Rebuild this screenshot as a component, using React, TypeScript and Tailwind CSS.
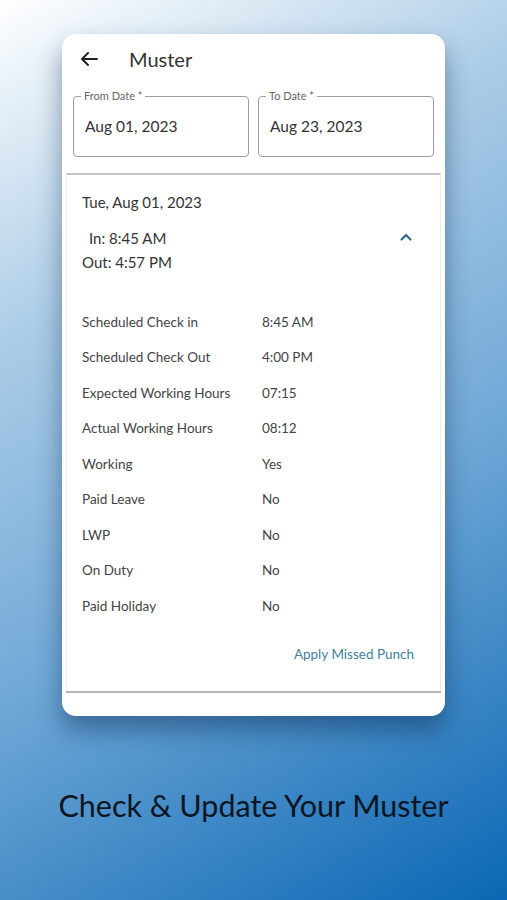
const rows: [string, string][] = [
  ["Scheduled Check in", "8:45 AM"],
  ["Scheduled Check Out", "4:00 PM"],
  ["Expected Working Hours", "07:15"],
  ["Actual Working Hours", "08:12"],
  ["Working", "Yes"],
  ["Paid Leave", "No"],
  ["LWP", "No"],
  ["On Duty", "No"],
  ["Paid Holiday", "No"],
];

function DateField({ label, value }: { label: string; value: string }) {
  return (
    <div className="relative flex-1 h-[61px] border border-[#9e9e9e] rounded-[4px] flex items-center pl-[11px]">
      <span className="absolute -top-[8px] left-[7px] bg-white px-[3px] text-[11px] leading-[14px] text-[#666]">
        {label}
      </span>
      <span className="text-[15.5px] text-[#333]">{value}</span>
    </div>
  );
}

export default function App() {
  return (
    <div
      className="w-[507px] h-[900px] overflow-hidden bg-[linear-gradient(150deg,#ffffff_0%,#a9cbe6_30%,#6ea7d6_60%,#0b67b4_100%)] pt-[34px] font-['Lato',sans-serif]"
    >
      <div className="w-[383px] mx-auto bg-white rounded-[14px] shadow-[0_14px_24px_rgba(10,40,80,0.45)] pb-[25px]">
        {/* header */}
        <div className="h-[50px] flex items-center pl-[18px]">
          <svg width="18" height="16" viewBox="0 0 18 16" fill="none">
            <path d="M17 8H2M8 2L2 8l6 6" stroke="#222" strokeWidth="2" strokeLinecap="round" strokeLinejoin="round" />
          </svg>
          <span className="ml-[31px] text-[20px] text-[#333]">Muster</span>
        </div>

        {/* date fields */}
        <div className="flex gap-[9px] px-[11px] mt-[12px]">
          <DateField label="From Date *" value="Aug 01, 2023" />
          <DateField label="To Date *" value="Aug 23, 2023" />
        </div>

        {/* day card */}
        <div className="mx-[4px] mt-[16px] border-t-2 border-[#c4c4c4] border-x border-x-[#ececec] shadow-[0_2px_0_#b5b5b5]">
          <div className="pl-[15px] pr-[26px] pt-[17px]">
            <div className="text-[15px] leading-[20px] text-[#333]">Tue, Aug 01, 2023</div>
            <div className="flex justify-between items-start mt-[14px]">
              <div className="text-[15px] leading-[24px] text-[#333]">
                <div className="pl-[7px]">In: 8:45 AM</div>
                <div>Out: 4:57 PM</div>
              </div>
              <svg width="14" height="10" viewBox="0 0 14 10" fill="none" className="mt-[6px] mr-[1px]">
                <path d="M2.5 7.5L7 3l4.5 4.5" stroke="#2e6b8c" strokeWidth="2.2" strokeLinecap="round" strokeLinejoin="round" />
              </svg>
            </div>

            <div className="mt-[30px]">
              {rows.map(([k, v]) => (
                <div key={k} className="flex items-center h-[35.5px] text-[13.5px]">
                  <span className="w-[180px] text-[#444]">{k}</span>
                  <span className="text-[#444]">{v}</span>
                </div>
              ))}
            </div>

            <div className="flex justify-end mt-[20px] pb-[27px]">
              <span className="text-[13.5px] leading-[20px] text-[#3f7f9f]">Apply Missed Punch</span>
            </div>
          </div>
        </div>
      </div>

      <div className="mt-[69px] text-center text-[30.5px] leading-[40px] text-[#0b1622]">
        Check &amp; Update Your Muster
      </div>
    </div>
  );
}
